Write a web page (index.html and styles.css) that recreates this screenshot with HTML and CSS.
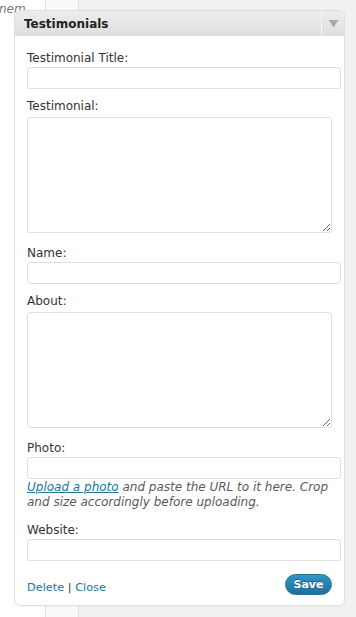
FILE: index.html
```html
<!DOCTYPE html>
<html>
<head>
<meta charset="utf-8">
<link rel="stylesheet" href="styles.css">
</head>
<body>
<div class="page">
  <div class="col-left"><span class="cut-text">nem</span></div>
  <div class="col-mid"></div>
  <div class="col-main"></div>
</div>

<div class="widget">
  <div class="widget-top">
    <h4 class="widget-title">Testimonials</h4>
    <div class="widget-toggle">
      <svg width="11" height="9" viewBox="0 0 11 9"><polygon points="0.5,1 10.5,1 5.5,9" fill="#fff"/><polygon points="0.5,0 10.5,0 5.5,8" fill="#a9a9a9"/></svg>
    </div>
  </div>
  <div class="widget-inside">
    <div class="field">
      <label class="lbl">Testimonial Title:</label>
      <input class="txt" type="text">
    </div>
    <div class="field">
      <label class="lbl">Testimonial:</label>
      <textarea class="area"></textarea>
    </div>
    <div class="field">
      <label class="lbl">Name:</label>
      <input class="txt" type="text">
    </div>
    <div class="field">
      <label class="lbl">About:</label>
      <textarea class="area"></textarea>
    </div>
    <div class="field">
      <label class="lbl">Photo:</label>
      <input class="txt" type="text">
      <p class="hint"><a class="hint-link" href="#">Upload a photo</a> and paste the URL to it here. Crop and size accordingly before uploading.</p>
    </div>
    <div class="field field-last">
      <label class="lbl">Website:</label>
      <input class="txt" type="text">
    </div>
    <div class="footer">
      <div class="links"><a class="link" href="#">Delete</a> | <a class="link" href="#">Close</a></div>
      <button class="save" type="button">Save</button>
    </div>
  </div>
</div>
</body>
</html>
```

FILE: styles.css
```css
html, body {
  margin: 0;
  padding: 0;
  height: 100%;
}
body {
  font-family: "DejaVu Sans", "Liberation Sans", sans-serif;
  font-size: 12px;
  color: #333;
  background: #f1f1f1;
  overflow: hidden;
}
.page {
  display: flex;
  height: 617px;
}
.col-left {
  width: 45px;
  background: #fff;
  border-right: 1px solid #dfdfdf;
  overflow: hidden;
}
.cut-text {
  display: block;
  margin-top: 1px;
  margin-left: -1px;
  font-style: italic;
  font-size: 12px;
  line-height: 16px;
  color: #777;
}
.col-mid {
  width: 32px;
  background: #f9f9f9;
  border-right: 1px solid #dfdfdf;
}
.col-main {
  flex: 1;
  background: #f1f1f1;
}

.widget {
  position: absolute;
  left: 14px;
  top: 10px;
  width: 331px;
  box-sizing: border-box;
  border: 1px solid #dfdfdf;
  border-radius: 6px;
  background: #fff;
  box-shadow: 0 1px 2px rgba(0,0,0,0.04);
}
.widget-top {
  display: flex;
  height: 25px;
  background: linear-gradient(#ededed, #dedede);
  border-radius: 5px 5px 0 0;
}
.widget-title {
  flex: 1;
  margin: 0;
  padding: 2px 0 0 9px;
  font-size: 12px;
  font-weight: bold;
  line-height: 23px;
  color: #222;
}
.widget-toggle {
  width: 22px;
  border-left: 1px solid #f4f4f4;
  display: flex;
  align-items: center;
  justify-content: center;
  padding-top: 1px;
}
.widget-inside {
  padding: 14px 3px 10px 12px;
}
.field {
  margin-bottom: 9px;
}
.lbl {
  display: block;
  line-height: 16px;
  color: #333;
}
.txt {
  display: block;
  box-sizing: border-box;
  width: 314px;
  height: 22px;
  margin: 1px 0 0 0;
  border: 1px solid #dfdfdf;
  border-radius: 3px;
  background: #fff;
  font-family: inherit;
  font-size: 12px;
}
.area {
  display: block;
  box-sizing: border-box;
  width: 305px;
  height: 116px;
  margin: 3px 0 12px 0;
  border: 1px solid #dfdfdf;
  border-radius: 3px;
  background: #fff;
  font-family: inherit;
  font-size: 12px;
}
.field:has(.area) {
  margin-bottom: 0;
}
.hint {
  margin: 1px 0 12px 0;
  font-style: italic;
  line-height: 15px;
  color: #5a5a5a;
}
.field:has(.hint) {
  margin-bottom: 0;
}
.hint-link {
  color: #21759b;
  text-decoration: underline;
}
.field-last {
  margin-bottom: 13px;
}
.footer {
  display: flex;
  justify-content: space-between;
  align-items: center;
  margin-right: 9px;
}
.links {
  padding-top: 5px;
  font-size: 11.3px;
  color: #333;
}
.link {
  color: #21759b;
  text-decoration: none;
}
.save {
  box-sizing: border-box;
  width: 47px;
  height: 21px;
  padding: 0;
  border: 1px solid #21759b;
  border-radius: 11px;
  background: linear-gradient(#2e95c8, #1f6f97);
  color: #fff;
  font-family: "DejaVu Sans", sans-serif;
  font-weight: bold;
  font-size: 11px;
  text-shadow: 0 -1px 0 rgba(0,0,0,0.35);
}
```
